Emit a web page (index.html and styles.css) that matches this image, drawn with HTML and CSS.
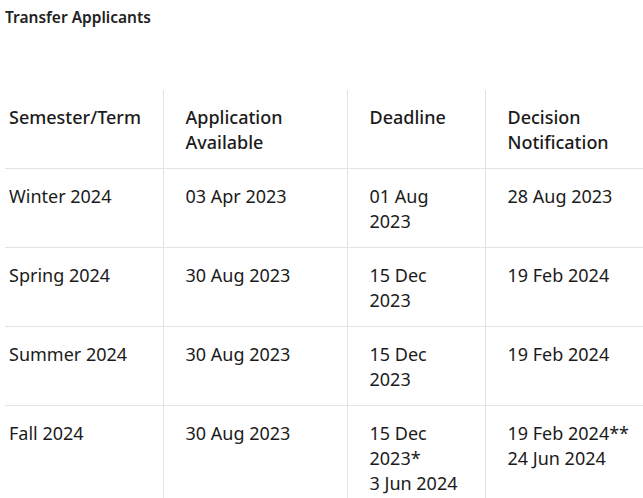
FILE: index.html
```html
<!DOCTYPE html>
<html lang="en">
<head>
<meta charset="utf-8">
<title>Transfer Applicants</title>
<link rel="stylesheet" href="styles.css">
</head>
<body>
<h2 class="title">Transfer Applicants</h2>
<table class="dates">
  <colgroup>
    <col class="c1"><col class="c2"><col class="c3"><col class="c4">
  </colgroup>
  <thead>
    <tr>
      <th>Semester/Term</th>
      <th>Application Available</th>
      <th>Deadline</th>
      <th>Decision Notification</th>
    </tr>
  </thead>
  <tbody>
    <tr>
      <td>Winter 2024</td>
      <td>03 Apr 2023</td>
      <td>01 Aug 2023</td>
      <td>28 Aug 2023</td>
    </tr>
    <tr>
      <td>Spring 2024</td>
      <td>30 Aug 2023</td>
      <td>15 Dec 2023</td>
      <td>19 Feb 2024</td>
    </tr>
    <tr>
      <td>Summer 2024</td>
      <td>30 Aug 2023</td>
      <td>15 Dec 2023</td>
      <td>19 Feb 2024</td>
    </tr>
    <tr>
      <td>Fall 2024</td>
      <td>30 Aug 2023</td>
      <td>15 Dec 2023*<br>3 Jun 2024</td>
      <td>19 Feb 2024**<br>24 Jun 2024</td>
    </tr>
  </tbody>
</table>
</body>
</html>
```
FILE: styles.css
```css
html, body {
  margin: 0;
  padding: 0;
  background: #ffffff;
  overflow: hidden;
}
body {
  padding: 7px 0 0 5px;
  font-family: "Noto Sans", "Open Sans", sans-serif;
  color: #1b1b1b;
}
.title {
  margin: 0;
  font-size: 15.5px;
  line-height: 20px;
  font-weight: 600;
  color: #222222;
}
.dates {
  margin-top: 63px;
  border-collapse: collapse;
  table-layout: fixed;
  width: 638px;
  font-size: 18px;
  line-height: 25px;
}
.c1 { width: 158px; }
.c2 { width: 184px; }
.c3 { width: 138px; }
.c4 { width: 158px; }
.dates th,
.dates td {
  text-align: left;
  vertical-align: top;
  padding: 15px 11px 13px 22px;
  border-left: 1px solid #e3e3e3;
}
.dates th:nth-child(3),
.dates td:nth-child(3) {
  padding-right: 25px;
}
.dates th {
  font-weight: 500;
}
.dates th:first-child,
.dates td:first-child {
  border-left: none;
  padding-left: 4px;
}
.dates tbody tr {
  border-top: 1px solid #e3e3e3;
}
```
